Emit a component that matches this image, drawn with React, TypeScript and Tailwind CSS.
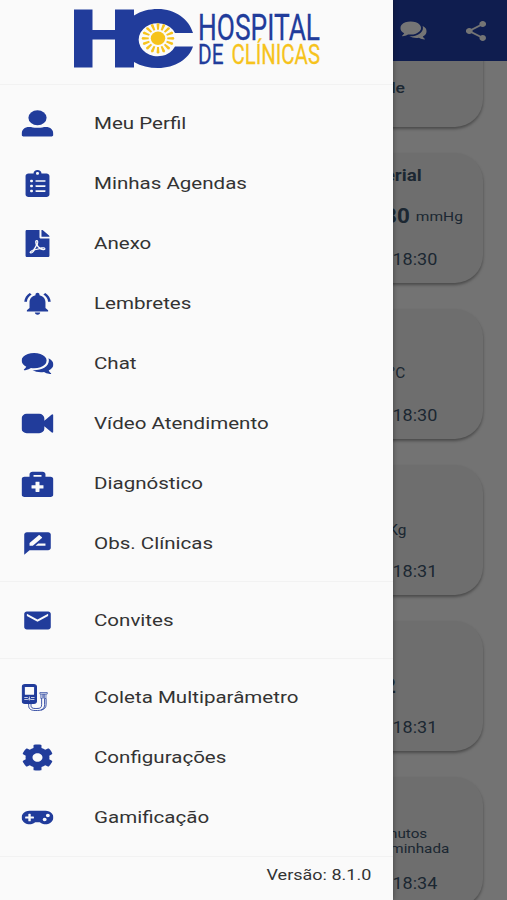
import type { ReactNode } from 'react';
import { FaBriefcaseMedical, FaClipboardList, FaCog, FaFilePdf, FaGamepad } from 'react-icons/fa';
import { MdEmail, MdNotificationsActive, MdRateReview, MdShare } from 'react-icons/md';

const RAYS = Array.from({ length: 16 }, (_, i) => i * 22.5);

function Logo() {
  return (
    <svg width="250" height="64" viewBox="72 6 250 64" className="block overflow-visible">
      <g fill="#213c9b">
        <path d="M74 9.500h18.500V30H115V9.500h19V67.500H115V39.500H92.500V67.500H74z" />
        <path d="M193 33C189 19 175 9 158 9c-9 0-17 2-24 6.500V62c7 4 15 6 24 6c17 0 31-9 35-21.500H175a19 16.500 0 1 1 0-13.500z" />
      </g>
      <g transform="translate(158 38.300)" fill="#f6c31c">
        <ellipse rx="7.200" ry="6.700" />
        {RAYS.map((a) => (
          <path key={a} d="M-.9-9L-1.400-15L0-16L1.400-15L.9-9z" transform={`scale(1.030 .96) rotate(${a})`} />
        ))}
      </g>
      <g fontFamily="Roboto, sans-serif" fontWeight="400">
        <text x="198" y="39.500" fontSize="37.500" fill="#213c9b" stroke="#213c9b" strokeWidth="0.300" textLength="122" lengthAdjust="spacingAndGlyphs">HOSPITAL</text>
        <text x="198" y="63.700" fontSize="28.500" fill="#213c9b" stroke="#213c9b" strokeWidth="0.300" textLength="25.500" lengthAdjust="spacingAndGlyphs">DE</text>
        <text x="231.500" y="63.700" fontSize="28.500" fill="#f6c31c" stroke="#f6c31c" strokeWidth="0.300" textLength="88.500" lengthAdjust="spacingAndGlyphs">CLÍNICAS</text>
      </g>
    </svg>
  );
}

function PersonIcon() {
  return (
    <svg width="27" height="27" viewBox="0 0 27 27" fill="currentColor">
      <ellipse cx="13.500" cy="7.700" rx="7.700" ry="7.500" />
      <path d="M0 24.500C0 19.500 2.500 17 6.500 17C8.500 17 10 17.800 13.500 17.800S18.500 17 20.500 17C24.500 17 27 19.500 27 24.500Q27 26.500 24.500 26.500H2.500Q0 26.500 0 24.500z" />
    </svg>
  );
}

function CommentsIcon({ size = 27 }: { size?: number }) {
  return (
    <svg width={size} height={size} viewBox="0 64 1792 1792" fill="currentColor">
      <path d="M1408 768q0 139-94 257t-256.500 186.500-353.500 68.500q-86 0-176-16-124 88-278 128-36 9-86 16h-3q-11 0-20.500-8t-11.500-21q-1-3-1-6.500t.5-6.500 2-6l2.500-5 3.500-5.500 4-5 4.500-5 4-4.500q5-6 23-25t26-29.500 22.500-29 25-38.500 20.500-44q-124-72-195-177t-71-224q0-139 94-257t256.500-186.500 353.500-68.500 353.500 68.500 256.500 186.500 94 257zm384 256q0 120-71 224.500t-195 176.500q10 24 20.500 44t25 38.500 22.500 29 26 29.500 23 25q1 1 4 4.500t4.500 5 4 5 3.500 5.500l2.500 5 2 6 .5 6.500-1 6.500q-3 14-13 22t-22 7q-50-7-86-16-154-40-278-128-90 16-176 16-271 0-472-132 58 4 88 4 161 0 309-45t264-129q125-92 192-212t67-254q0-77-23-152 129 71 204 178t75 230z" />
    </svg>
  );
}

function CameraIcon() {
  return (
    <svg width="27" height="27" viewBox="0 0 1792 1792" fill="currentColor">
      <path d="M1792 352v1088q0 42-39 59-13 5-25 5-27 0-45-19l-403-403v166q0 119-84.500 203.500t-203.500 84.500h-704q-119 0-203.500-84.500t-84.500-203.500v-704q0-119 84.500-203.500t203.500-84.500h704q119 0 203.500 84.500t84.500 203.500v165l403-402q18-19 45-19 12 0 25 5 39 17 39 59z" />
    </svg>
  );
}

function MonitorIcon() {
  return (
    <svg width="27" height="27" viewBox="0 0 27 27" fill="none" stroke="currentColor">
      <rect x="0.600" y="0.600" width="12" height="19" rx="2.500" fill="currentColor" strokeWidth="1" />
      <rect x="2.800" y="3" width="7.800" height="7.800" rx="0.500" fill="#fafafa" stroke="none" />
      <path d="M2.300 13.500h3M8 13.500h3M2.300 15.500h3l1.300-1 1.300 1h3M6.600 12.500v4" stroke="#fafafa" strokeWidth="0.700" />
      <path d="M6 19.500v2c0 3.500 2 5 5.500 5h2c4 0 6-2 6-6V14.500M8 19.500v2c0 2 1 3 3.500 3h1.500c3 0 4-1 4-4V14.500M20.800 14.500v6c0 3-1.500 5-4.500 5.700" strokeWidth="0.800" />
      <path d="M16.300 10v4.500h1.200V10M18.500 10v4.500M19.500 10v4.500h1.200V10M15.500 8.500h6.300v1.500h-6.300z" strokeWidth="0.600" />
    </svg>
  );
}

function Item({ icon, label }: { icon: ReactNode; label: string }) {
  return (
    <li className="flex h-[60px] items-center gap-[43px] pl-6">
      <span className="flex w-[27px] scale-x-[1.18] justify-center text-[#213c9b]">{icon}</span>
      <span className="origin-left scale-x-[1.208] whitespace-nowrap text-[17px] leading-6 text-[#333]">{label}</span>
    </li>
  );
}

function Section({ children }: { children: ReactNode }) {
  return <ul className="border-t border-[#f2f2f2] py-2">{children}</ul>;
}

function Card({ time, children }: { time?: string; children?: ReactNode }) {
  return (
    <section className="flex h-[130px] shrink-0 flex-col justify-between rounded-[28px] bg-[#f0f0f0] pt-[13px] pb-3 text-[#3d566d] shadow-[0_2px_3px_rgba(0,0,0,0.35)]">
      <div className="flex flex-col">{children}</div>
      {time && (
        <p className="flex justify-end pr-[46px] text-[17px] leading-6">
          <span className="origin-right scale-x-[1.06]">{time}</span>
        </p>
      )}
    </section>
  );
}

export default function App() {
  return (
    <div className="relative h-[900px] w-[507px] overflow-hidden bg-[#fafafa] font-[Roboto,sans-serif]">
      <header className="relative z-10 flex h-[61px] items-center justify-end gap-[39px] bg-[#213fac] pr-[19px] text-white">
        <span className="scale-x-[1.15]"><CommentsIcon size={23} /></span>
        <MdShare size={24} className="scale-x-[1.12]" />
      </header>
      <main className="-mt-16 flex flex-col gap-[26px] px-6">
        <Card>
          <p className="flex justify-end pt-[68px] pr-[78px] text-[15px] leading-5 font-medium">
            <span className="origin-right scale-x-[1.17]">Saúde</span>
          </p>
        </Card>
        <Card time="18:30">
          <h2 className="flex justify-end pr-[61px] text-base leading-5 font-bold">
            <span className="origin-right scale-x-[1.17]">Pressão Arterial</span>
          </h2>
          <p className="flex items-center justify-end gap-3 pt-[18px] pr-5 leading-6">
            <strong className="origin-right scale-x-[1.12] text-xl leading-6">120/80</strong>
            <span className="origin-right scale-x-[1.15] text-[13.5px]">mmHg</span>
          </p>
        </Card>
        <Card time="18:30">
          <p className="flex justify-end pt-[41px] pr-[78px] text-sm leading-5">
            <span className="origin-right scale-x-[1.1]">°C</span>
          </p>
        </Card>
        <Card time="18:31">
          <p className="flex justify-end pt-[42px] pr-[77px] text-sm leading-5">
            <span className="origin-right scale-x-[1.1]">Kg</span>
          </p>
        </Card>
        <Card time="18:31">
          <p className="flex justify-end pt-10 pr-[87px] text-xl leading-6 font-bold">
            <span className="origin-right scale-x-[1.17]">22</span>
          </p>
        </Card>
        <Card time="18:34">
          <p className="flex justify-end pt-9 pr-[56px] text-[13px] leading-[15px]">
            <span className="origin-right scale-x-[1.17]">minutos</span>
          </p>
          <p className="flex justify-end pr-[34px] text-[13px] leading-[15px]">
            <span className="origin-right scale-x-[1.17]">caminhada</span>
          </p>
        </Card>
      </main>

      <div className="absolute inset-0 z-20 bg-black/54" />

      <aside className="absolute inset-y-0 left-0 z-30 flex w-[392.5px] flex-col bg-[#fafafa] shadow-[0_0_5px_rgba(0,0,0,0.4)]">
        <div className="h-[84px] pt-1.5 pl-[72px]">
          <Logo />
        </div>
        <nav>
          <Section>
            <Item icon={<PersonIcon />} label="Meu Perfil" />
            <Item icon={<FaClipboardList size={27} />} label="Minhas Agendas" />
            <Item icon={<FaFilePdf size={27} />} label="Anexo" />
            <Item icon={<MdNotificationsActive size={27} />} label="Lembretes" />
            <Item icon={<CommentsIcon />} label="Chat" />
            <Item icon={<CameraIcon />} label="Vídeo Atendimento" />
            <Item icon={<FaBriefcaseMedical size={27} />} label="Diagnóstico" />
            <Item icon={<MdRateReview size={27} />} label="Obs. Clínicas" />
          </Section>
          <Section>
            <Item icon={<MdEmail size={27} />} label="Convites" />
          </Section>
          <Section>
            <Item icon={<MonitorIcon />} label="Coleta Multiparâmetro" />
            <Item icon={<FaCog size={27} />} label="Configurações" />
            <Item icon={<FaGamepad size={27} />} label="Gamificação" />
          </Section>
        </nav>
        <footer className="mt-px flex flex-1 justify-end border-t border-[#f2f2f2] pt-2 pr-[21.5px]">
          <span className="origin-right scale-x-[1.2] text-[15px] leading-5 text-[#333]">Versão: 8.1.0</span>
        </footer>
      </aside>
    </div>
  );
}
